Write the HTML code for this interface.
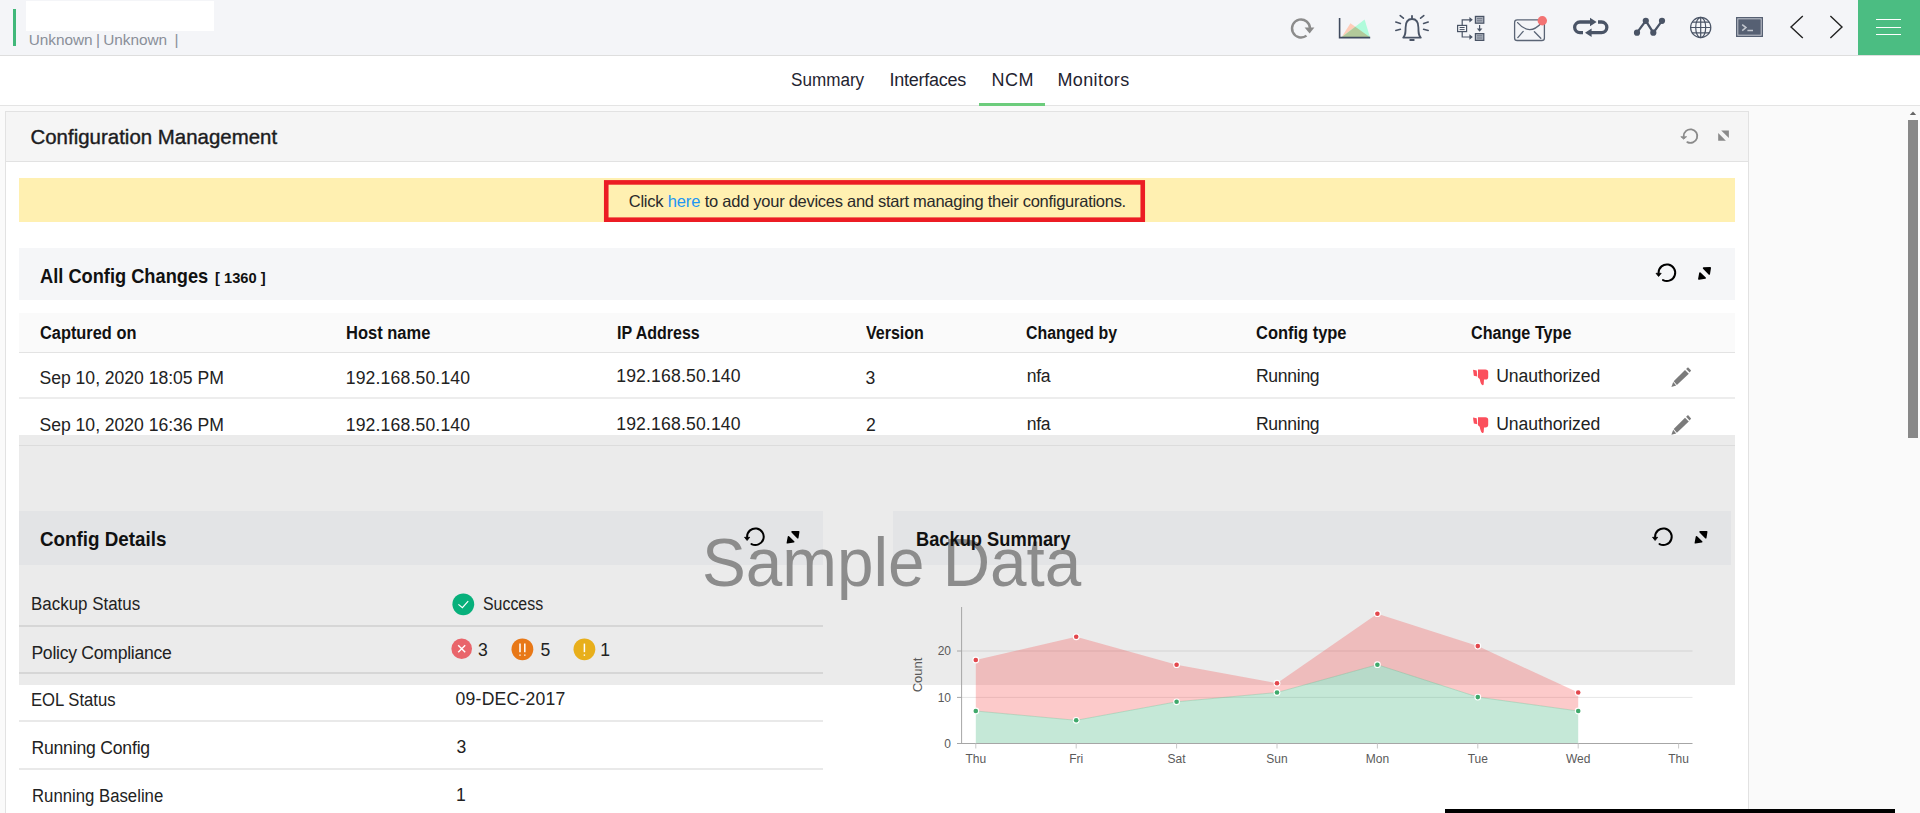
<!DOCTYPE html>
<html lang="en"><head><meta charset="utf-8"><title>Configuration Management - NCM</title>
<style>
html,body{margin:0;padding:0;overflow:hidden}
body{width:1920px;height:813px;overflow:hidden;background:#fafafa;font-family:'Liberation Sans',sans-serif;position:relative}
.a{position:absolute}
.t{position:absolute;display:block;white-space:pre;margin:0;padding:0;font-weight:normal;text-decoration:none}
svg{position:absolute;left:0;top:0;overflow:visible}
</style></head>
<body>
<header class="a" style="left:0;top:0;width:1920px;height:55px;background:#f4f5f8;border-bottom:1px solid #dedede">
<div class="a" style="left:13px;top:9px;width:3px;height:37px;background:#41b87a"></div>
<div class="a" style="left:26px;top:1px;width:188px;height:30px;background:#fff"></div>
<div class="t" style="left:28.84px;top:29.70px;font-size:15.4px;line-height:20px;color:#8a8f98;letter-spacing:-0.079px;">Unknown</div>
<div class="t" style="left:96.10px;top:29.70px;font-size:15.4px;line-height:20px;color:#8a8f98;">|</div>
<div class="t" style="left:103.34px;top:29.70px;font-size:15.4px;line-height:20px;color:#8a8f98;letter-spacing:-0.079px;">Unknown</div>
<div class="t" style="left:174.60px;top:29.70px;font-size:15.4px;line-height:20px;color:#8a8f98;">|</div>
<svg class="a" width="1920" height="56" viewBox="0 0 1920 56" fill="none">
<!-- refresh -->
<path d="M1306.5 35.6A9 9 0 1 1 1310 28.5" stroke="#8c8c8c" stroke-width="2.4"/><path d="M1304.6 27.6H1314.4L1309.6 33.4Z" fill="#8a8a8a"/>
<!-- area chart -->
<path d="M1341.6 37.2L1350.4 23.2L1370 37.2Z" fill="#ffcdb9"/><path d="M1341.6 37.2L1364.6 19.4L1370 37.2Z" fill="#b0fbdb"/><path d="M1341.6 37.2L1355.3 26.7L1370 37.2Z" fill="#b2c99a"/>
<path d="M1339.6 18V37.6H1370.2" stroke="#3f4a5e" stroke-width="1.6"/>
<!-- bell -->
<g stroke="#4a5466" stroke-width="1.8" stroke-linecap="round" stroke-linejoin="round">
<path d="M1403.2 37.6C1405.6 35.4 1405.6 32.6 1405.6 27.6C1405.6 22 1408.2 19 1412 19C1415.8 19 1418.4 22 1418.4 27.6C1418.4 32.6 1418.4 35.4 1420.8 37.6Z"/>
<path d="M1412 15.8V18.6M1410.2 40H1413.8"/>
<path d="M1400.2 15.6L1403.4 18.2M1395.8 22L1400.4 23.4M1395.8 30.4L1400.4 29.2M1423.8 15.6L1420.6 18.2M1428.2 22L1423.6 23.4M1428.2 30.4L1423.6 29.2" stroke-width="1.6"/>
</g>
<!-- workflow -->
<g stroke="#4a5466" stroke-width="1.2">
<rect x="1457.6" y="25.4" width="9" height="6.2" fill="#f4f5f8"/><path d="M1459.6 27.5H1464.6M1459.6 29.6H1464.6" stroke-width="1"/>
<rect x="1475.4" y="16.4" width="8.4" height="6.8" fill="#a9afba"/><rect x="1475.4" y="33.6" width="8.4" height="6.8" fill="#a9afba"/>
<path d="M1477 18.6H1482.2M1477 20.8H1482.2M1477 35.8H1482.2M1477 38H1482.2" stroke-width=".9" stroke="#6b7485"/>
<path d="M1462.2 25V19.8H1470M1462.2 32V37H1470M1479.6 25V29.4"/>
</g>
<path d="M1469.4 17L1472.8 19.8L1469.4 22.6ZM1469.4 34.2L1472.8 37L1469.4 39.8ZM1476.8 28.6H1482.4L1479.6 31.8Z" fill="#4a5466"/>
<!-- mail -->
<g stroke="#5a6475" stroke-width="1.3" stroke-linecap="round"><rect x="1514.6" y="19.9" width="29.8" height="20.6" rx="2.6"/>
<path d="M1517.6 22.6Q1529.6 36.4 1541.4 23M1523.2 31.4L1517.8 37.6M1534.4 31.8L1540.8 38.2"/></g>
<circle cx="1542.3" cy="20.7" r="4.7" fill="#f37373"/>
<!-- loop -->
<g stroke="#4a5466" stroke-width="3.3"><path d="M1583 32.7H1580A5.35 5.35 0 0 1 1580 22H1591"/><path d="M1598 22H1601.5A5.35 5.35 0 0 1 1601.5 32.7H1591"/></g>
<path d="M1590 17.8L1596.6 22L1590 26.2ZM1591.6 28.5L1585 32.7L1591.6 36.9Z" fill="#4a5466"/>
<!-- line graph -->
<path d="M1637 32.7L1645.8 20.8L1653.3 32.7L1662 20.8" stroke="#4a5466" stroke-width="2.2"/>
<g fill="#4a5466"><circle cx="1637" cy="32.7" r="3.1"/><circle cx="1645.8" cy="20.8" r="3.1"/><circle cx="1653.3" cy="32.7" r="3.1"/><circle cx="1662" cy="20.8" r="3.1"/></g>
<!-- globe -->
<g stroke="#4a5466" stroke-width="1.2"><circle cx="1700.7" cy="27.5" r="10.1"/><ellipse cx="1700.7" cy="27.5" rx="5" ry="10.1"/>
<path d="M1700.7 17.4V37.6M1690.6 27.5H1710.8M1692.2 22.2H1709.2M1692.2 32.8H1709.2"/></g>
<!-- terminal -->
<rect x="1736" y="17" width="27" height="20" fill="#566073"/><rect x="1737.8" y="18.8" width="23.4" height="16.4" stroke="#c3c7cf" stroke-width="1"/>
<path d="M1742.2 24.6L1746 27.6L1742.2 30.6M1747.4 30.4H1753" stroke="#c3c7cf" stroke-width="1.5"/>
<!-- chevrons -->
<path d="M1802.8 16L1791 27L1802.8 38M1830.4 16L1842 27L1830.4 38" stroke="#222" stroke-width="1.4"/>
</svg>
<div class="a" style="left:1858px;top:0;width:62px;height:55px;background:#4bbd82"></div>
<div class="a" style="left:1876px;top:18.8px;width:25px;height:1.4px;background:#fff"></div>
<div class="a" style="left:1876px;top:26.7px;width:25px;height:1.4px;background:#fff"></div>
<div class="a" style="left:1876px;top:33.8px;width:25px;height:1.4px;background:#fff"></div>
</header>
<nav class="a" style="left:0;top:56px;width:1920px;height:49px;background:#fff;border-bottom:1px solid #e4e4e4">
<div class="a" style="left:979px;top:47px;width:66px;height:3px;background:#6ccc7c"></div>
</nav>
<a class="t" style="left:790.57px;top:68.50px;font-size:18px;line-height:23px;color:#1f2430;transform:scaleX(0.9497);transform-origin:0 0;">Summary</a>
<a class="t" style="left:889.39px;top:68.50px;font-size:18px;line-height:23px;color:#1f2430;letter-spacing:-0.241px;">Interfaces</a>
<a class="t" style="left:991.39px;top:68.50px;font-size:18px;line-height:23px;color:#1f2430;letter-spacing:0.513px;">NCM</a>
<a class="t" style="left:1057.39px;top:68.50px;font-size:18px;line-height:23px;color:#1f2430;letter-spacing:0.407px;">Monitors</a>
<main>
<section class="a" style="left:5px;top:111px;width:1742px;height:720px;background:#fff;border:1px solid #e2e2e2">
<div class="a" style="left:0;top:0;width:1742px;height:49px;background:#f5f5f5;border-bottom:1px solid #e2e2e2"></div>
</section>
<h1 class="t" style="left:30.44px;top:124.40px;font-size:20.4px;line-height:26px;color:#1c1c1e;letter-spacing:0.031px;-webkit-text-stroke:0.4px #1c1c1e;">Configuration Management</h1>
<div class="a" style="left:19px;top:178px;width:1716px;height:44px;background:#fff0b1"></div>
<svg class="a" width="1920" height="813" viewBox="0 0 1920 813"><rect x="606.25" y="182.4" width="536.5" height="37.3" fill="none" stroke="#ec1c24" stroke-width="4.6"/></svg>
<div class="t" style="left:628.83px;top:190.50px;font-size:16.5px;line-height:21px;color:#2a2a2a;letter-spacing:-0.283px;">Click</div>
<a class="t" style="left:667.77px;top:190.50px;font-size:16.5px;line-height:21px;color:#2196f3;letter-spacing:-0.141px;">here</a>
<div class="t" style="left:704.80px;top:190.50px;font-size:16.5px;line-height:21px;color:#2a2a2a;letter-spacing:-0.273px;">to add your devices and start managing their configurations.</div>
<div class="a" style="left:19px;top:248px;width:1716px;height:52px;background:#f5f6f8"></div>
<h2 class="t" style="left:40.21px;top:262.70px;font-size:20.2px;line-height:26px;color:#111;font-weight:bold;transform:scaleX(0.9036);transform-origin:0 0;">All Config Changes</h2>
<div class="t" style="left:214.81px;top:267.50px;font-size:15.4px;line-height:20px;color:#111;font-weight:bold;transform:scaleX(0.9543);transform-origin:0 0;">[ 1360 ]</div>
<div class="a" style="left:19px;top:313px;width:1716px;height:39px;background:#fafafa;border-bottom:1px solid #e3e3e3"></div>
<strong class="t" style="left:40.09px;top:321.50px;font-size:17.6px;line-height:22px;color:#111;font-weight:bold;transform:scaleX(0.9302);transform-origin:0 0;">Captured on</strong>
<strong class="t" style="left:345.77px;top:321.50px;font-size:17.6px;line-height:22px;color:#111;font-weight:bold;transform:scaleX(0.9374);transform-origin:0 0;">Host name</strong>
<strong class="t" style="left:617.30px;top:321.50px;font-size:17.6px;line-height:22px;color:#111;font-weight:bold;transform:scaleX(0.9098);transform-origin:0 0;">IP Address</strong>
<strong class="t" style="left:865.60px;top:321.50px;font-size:17.6px;line-height:22px;color:#111;font-weight:bold;transform:scaleX(0.9102);transform-origin:0 0;">Version</strong>
<strong class="t" style="left:1025.60px;top:321.50px;font-size:17.6px;line-height:22px;color:#111;font-weight:bold;transform:scaleX(0.9035);transform-origin:0 0;">Changed by</strong>
<strong class="t" style="left:1255.59px;top:321.50px;font-size:17.6px;line-height:22px;color:#111;font-weight:bold;transform:scaleX(0.9353);transform-origin:0 0;">Config type</strong>
<strong class="t" style="left:1470.59px;top:321.50px;font-size:17.6px;line-height:22px;color:#111;font-weight:bold;transform:scaleX(0.9204);transform-origin:0 0;">Change Type</strong>
<div class="a" style="left:19px;top:397px;width:1716px;height:2px;background:#ededed"></div>
<svg class="a" style="z-index:1" width="1920" height="813" viewBox="0 0 1920 813"><g transform="translate(0 0)" fill="#fb4f5c"><path d="M1473 369.8L1476.7 370.4L1477.3 376.4L1473.8 375.8Z"/>
<path d="M1478 369.4H1485.4Q1488.2 369.4 1488.2 372V377Q1488.2 379.6 1485.4 379.6H1484L1483.7 384.2Q1483.4 385.5 1482.3 385.1Q1481 384.5 1480.4 382L1479.7 379L1478 377.4Z"/></g>
<g transform="translate(0 0)" fill="#7b7b7b"><path d="M1673.7 381.2L1685 370L1688.8 373.8L1676.9 385Z"/><path d="M1673.2 382L1676.2 385.6L1671.4 386.9Z"/><path d="M1686.1 368.9L1688 367.3L1691.1 370.6L1689.6 372.6Z"/></g><g transform="translate(0 47.8)" fill="#fb4f5c"><path d="M1473 369.8L1476.7 370.4L1477.3 376.4L1473.8 375.8Z"/>
<path d="M1478 369.4H1485.4Q1488.2 369.4 1488.2 372V377Q1488.2 379.6 1485.4 379.6H1484L1483.7 384.2Q1483.4 385.5 1482.3 385.1Q1481 384.5 1480.4 382L1479.7 379L1478 377.4Z"/></g>
<g transform="translate(0 47.8)" fill="#7b7b7b"><path d="M1673.7 381.2L1685 370L1688.8 373.8L1676.9 385Z"/><path d="M1673.2 382L1676.2 385.6L1671.4 386.9Z"/><path d="M1686.1 368.9L1688 367.3L1691.1 370.6L1689.6 372.6Z"/></g></svg>
<span class="t" style="left:39.55px;top:367.00px;font-size:17.6px;line-height:22px;color:#222;letter-spacing:-0.030px;">Sep 10, 2020 18:05 PM</span>
<span class="t" style="left:345.70px;top:367.00px;font-size:17.6px;line-height:22px;color:#222;letter-spacing:0.161px;">192.168.50.140</span>
<span class="t" style="left:616.20px;top:365.00px;font-size:17.6px;line-height:22px;color:#222;letter-spacing:0.161px;">192.168.50.140</span>
<span class="t" style="left:865.55px;top:366.50px;font-size:17.6px;line-height:22px;color:#222;">3</span>
<span class="t" style="left:1026.70px;top:365.00px;font-size:17.6px;line-height:22px;color:#222;letter-spacing:-0.289px;">nfa</span>
<span class="t" style="left:1255.92px;top:365.00px;font-size:17.6px;line-height:22px;color:#222;letter-spacing:-0.300px;">Running</span>
<span class="t" style="left:1496.20px;top:365.00px;font-size:17.6px;line-height:22px;color:#222;letter-spacing:-0.041px;">Unauthorized</span>
<span class="t" style="left:39.55px;top:414.00px;font-size:17.6px;line-height:22px;color:#222;letter-spacing:-0.030px;">Sep 10, 2020 16:36 PM</span>
<span class="t" style="left:345.70px;top:414.00px;font-size:17.6px;line-height:22px;color:#222;letter-spacing:0.161px;">192.168.50.140</span>
<span class="t" style="left:616.20px;top:413.20px;font-size:17.6px;line-height:22px;color:#222;letter-spacing:0.161px;">192.168.50.140</span>
<span class="t" style="left:865.97px;top:413.50px;font-size:17.6px;line-height:22px;color:#222;">2</span>
<span class="t" style="left:1026.70px;top:413.20px;font-size:17.6px;line-height:22px;color:#222;letter-spacing:-0.289px;">nfa</span>
<span class="t" style="left:1255.92px;top:413.20px;font-size:17.6px;line-height:22px;color:#222;letter-spacing:-0.300px;">Running</span>
<span class="t" style="left:1496.20px;top:413.20px;font-size:17.6px;line-height:22px;color:#222;letter-spacing:-0.041px;">Unauthorized</span>
<div class="a" style="left:19px;top:435px;width:1716px;height:250px;background:#ebebeb;z-index:2"></div>
<div class="a" style="left:19px;top:445px;width:1716px;height:1px;background:#dcdcdc;z-index:2"></div>
<div class="a" style="left:19px;top:511px;width:804px;height:53.5px;background:#e3e4e6;z-index:2"></div>
<div class="a" style="left:893px;top:511px;width:838px;height:53.5px;background:#e3e4e6;z-index:2"></div>
<h2 class="t" style="left:40.01px;top:526.00px;font-size:20.2px;line-height:26px;color:#111;font-weight:bold;transform:scaleX(0.9312);transform-origin:0 0;z-index:5;">Config Details</h2>
<h2 class="t" style="left:915.66px;top:526.00px;font-size:20.2px;line-height:26px;color:#111;font-weight:bold;transform:scaleX(0.9050);transform-origin:0 0;z-index:5;">Backup Summary</h2>
<p class="t" style="left:701.65px;top:519.00px;font-size:69px;line-height:87px;color:#8c8c8c;transform:scaleX(0.9508);transform-origin:0 0;z-index:3;">Sample Data</p>
<span class="t" style="left:31.48px;top:593.00px;font-size:17.6px;line-height:22px;color:#222;transform:scaleX(0.9627);transform-origin:0 0;z-index:5;">Backup Status</span>
<span class="t" style="left:31.42px;top:641.50px;font-size:17.6px;line-height:22px;color:#222;letter-spacing:-0.268px;z-index:5;">Policy Compliance</span>
<span class="t" style="left:31.00px;top:689.00px;font-size:17.6px;line-height:22px;color:#222;transform:scaleX(0.9469);transform-origin:0 0;z-index:5;">EOL Status</span>
<span class="t" style="left:31.42px;top:736.50px;font-size:17.6px;line-height:22px;color:#222;letter-spacing:-0.197px;z-index:5;">Running Config</span>
<span class="t" style="left:32.09px;top:784.70px;font-size:17.6px;line-height:22px;color:#222;transform:scaleX(0.9516);transform-origin:0 0;z-index:5;">Running Baseline</span>
<span class="t" style="left:483.30px;top:592.70px;font-size:17.6px;line-height:22px;color:#222;transform:scaleX(0.9035);transform-origin:0 0;z-index:5;">Success</span>
<span class="t" style="left:478.05px;top:638.60px;font-size:17.6px;line-height:22px;color:#222;z-index:5;">3</span>
<span class="t" style="left:540.55px;top:638.60px;font-size:17.6px;line-height:22px;color:#222;z-index:5;">5</span>
<span class="t" style="left:600.30px;top:638.60px;font-size:17.6px;line-height:22px;color:#222;z-index:5;">1</span>
<span class="t" style="left:455.55px;top:687.50px;font-size:17.6px;line-height:22px;color:#222;letter-spacing:0.225px;z-index:5;">09-DEC-2017</span>
<span class="t" style="left:456.55px;top:735.50px;font-size:17.6px;line-height:22px;color:#222;z-index:5;">3</span>
<span class="t" style="left:456.00px;top:784.00px;font-size:17.6px;line-height:22px;color:#222;z-index:5;">1</span>
<div class="a" style="left:19px;top:624.6px;width:803.5px;height:2px;background:#000;opacity:.085;z-index:4"></div>
<div class="a" style="left:19px;top:672.2px;width:803.5px;height:2px;background:#000;opacity:.085;z-index:4"></div>
<div class="a" style="left:19px;top:720.0px;width:803.5px;height:2px;background:#000;opacity:.085;z-index:4"></div>
<div class="a" style="left:19px;top:767.8px;width:803.5px;height:2px;background:#000;opacity:.085;z-index:4"></div>
<svg class="a" style="z-index:5" width="1920" height="813" viewBox="0 0 1920 813" fill="none">
<circle cx="463.3" cy="604.3" r="10.9" fill="#07b07b"/><path d="M458.4 604.4L462.4 607.6L468.2 601.2" stroke="#fff" stroke-width="1.2"/>
<circle cx="461.7" cy="648.7" r="10.3" fill="#e9656b"/><path d="M458.2 645.2L465.2 652.2M465.2 645.2L458.2 652.2" stroke="#fff" stroke-width="1.4"/>
<circle cx="522.4" cy="649.3" r="10.9" fill="#e87817"/><path d="M520 643.6V652.2M524.8 643.6V652.2" stroke="#fff" stroke-width="1.5"/><path d="M519.3 654.4h1.4v1.4h-1.4zM524.1 654.4h1.4v1.4h-1.4z" fill="#fff"/>
<circle cx="584.4" cy="649.3" r="10.9" fill="#e8af1b"/><path d="M584.4 643.6V652.2" stroke="#fff" stroke-width="1.5"/><path d="M583.7 654.4h1.4v1.4h-1.4z" fill="#fff"/>
</svg>
<svg class="a" style="z-index:4" width="1920" height="813" viewBox="0 0 1920 813" font-family="'Liberation Sans',sans-serif" font-size="12" fill="#5a5a5a">
<g stroke="#000" stroke-opacity=".1" stroke-width="1"><line x1="962" y1="651" x2="1692.5" y2="651"/><line x1="962" y1="697.4" x2="1692.5" y2="697.4"/></g>
<polygon points="975.8,711.0 1076.2,720.3 1176.6,701.8 1277.0,692.5 1377.4,664.7 1477.8,697.1 1578.2,711.0 1578.2,743.5 975.8,743.5" fill="#3eb27a" fill-opacity=".3"/>
<polygon points="975.8,660.0 1076.2,636.8 1176.6,664.7 1277.0,683.2 1377.4,613.7 1477.8,646.1 1578.2,692.5 1578.2,711.0 1477.8,697.1 1377.4,664.7 1277.0,692.5 1176.6,701.8 1076.2,720.3 975.8,711.0" fill="#f44e4e" fill-opacity=".3"/>
<polyline points="975.8,711.0 1076.2,720.3 1176.6,701.8 1277.0,692.5 1377.4,664.7 1477.8,697.1 1578.2,711.0" fill="none" stroke="#3eb27a" stroke-opacity=".25" stroke-width="1"/>
<g stroke="#a6a6a6" stroke-width="1" fill="none"><line x1="961.6" y1="607" x2="961.6" y2="744"/><line x1="961.1" y1="743.5" x2="1692.5" y2="743.5"/>
<line x1="957" y1="651" x2="961.75" y2="651"/><line x1="957" y1="697.4" x2="961.75" y2="697.4"/><line x1="957" y1="743.5" x2="961.75" y2="743.5"/></g>
<g stroke="#c8c8c8" stroke-width="1"><line x1="975.8" y1="743.5" x2="975.8" y2="748.5"/><line x1="1076.2" y1="743.5" x2="1076.2" y2="748.5"/><line x1="1176.6" y1="743.5" x2="1176.6" y2="748.5"/><line x1="1277.0" y1="743.5" x2="1277.0" y2="748.5"/><line x1="1377.4" y1="743.5" x2="1377.4" y2="748.5"/><line x1="1477.8" y1="743.5" x2="1477.8" y2="748.5"/><line x1="1578.2" y1="743.5" x2="1578.2" y2="748.5"/><line x1="1678.6" y1="743.5" x2="1678.6" y2="748.5"/></g>
<circle cx="975.8" cy="660.0" r="3.4" fill="#fff"/><circle cx="975.8" cy="660.0" r="2.3" fill="#e2474c"/><circle cx="1076.2" cy="636.8" r="3.4" fill="#fff"/><circle cx="1076.2" cy="636.8" r="2.3" fill="#e2474c"/><circle cx="1176.6" cy="664.7" r="3.4" fill="#fff"/><circle cx="1176.6" cy="664.7" r="2.3" fill="#e2474c"/><circle cx="1277.0" cy="683.2" r="3.4" fill="#fff"/><circle cx="1277.0" cy="683.2" r="2.3" fill="#e2474c"/><circle cx="1377.4" cy="613.7" r="3.4" fill="#fff"/><circle cx="1377.4" cy="613.7" r="2.3" fill="#e2474c"/><circle cx="1477.8" cy="646.1" r="3.4" fill="#fff"/><circle cx="1477.8" cy="646.1" r="2.3" fill="#e2474c"/><circle cx="1578.2" cy="692.5" r="3.4" fill="#fff"/><circle cx="1578.2" cy="692.5" r="2.3" fill="#e2474c"/><circle cx="975.8" cy="711.0" r="3.4" fill="#fff"/><circle cx="975.8" cy="711.0" r="2.3" fill="#3fa96b"/><circle cx="1076.2" cy="720.3" r="3.4" fill="#fff"/><circle cx="1076.2" cy="720.3" r="2.3" fill="#3fa96b"/><circle cx="1176.6" cy="701.8" r="3.4" fill="#fff"/><circle cx="1176.6" cy="701.8" r="2.3" fill="#3fa96b"/><circle cx="1277.0" cy="692.5" r="3.4" fill="#fff"/><circle cx="1277.0" cy="692.5" r="2.3" fill="#3fa96b"/><circle cx="1377.4" cy="664.7" r="3.4" fill="#fff"/><circle cx="1377.4" cy="664.7" r="2.3" fill="#3fa96b"/><circle cx="1477.8" cy="697.1" r="3.4" fill="#fff"/><circle cx="1477.8" cy="697.1" r="2.3" fill="#3fa96b"/><circle cx="1578.2" cy="711.0" r="3.4" fill="#fff"/><circle cx="1578.2" cy="711.0" r="2.3" fill="#3fa96b"/>
<text x="951" y="655.3" text-anchor="end">20</text><text x="951" y="701.7" text-anchor="end">10</text><text x="951" y="748" text-anchor="end">0</text>
<text x="975.8" y="763" text-anchor="middle">Thu</text><text x="1076.2" y="763" text-anchor="middle">Fri</text><text x="1176.6" y="763" text-anchor="middle">Sat</text><text x="1277.0" y="763" text-anchor="middle">Sun</text><text x="1377.4" y="763" text-anchor="middle">Mon</text><text x="1477.8" y="763" text-anchor="middle">Tue</text><text x="1578.2" y="763" text-anchor="middle">Wed</text><text x="1678.6" y="763" text-anchor="middle">Thu</text>
<text transform="translate(921.5 675) rotate(-90)" text-anchor="middle" font-size="13">Count</text>
</svg>
<svg class="a" style="z-index:6" width="1920" height="813" viewBox="0 0 1920 813" fill="none">
<path d="M1683.70 136.10A6.8 6.8 0 1 1 1687.31 142.10" stroke="#8a8a8a" stroke-width="1.8" stroke-linecap="round" fill="none"/><path d="M1680.80 136.70H1686.60L1683.70 139.22Z" fill="#8a8a8a" stroke="#8a8a8a" stroke-width=".8" stroke-linejoin="round"/>
<path d="M1721.2 130.4H1728.9V138.1Z" fill="#8a8a8a"/><path d="M1718.2 133V140.7H1725.9Z" fill="#8a8a8a"/>
<path d="M1658.60 272.70A8.3 8.3 0 1 1 1663.00 280.03" stroke="#000" stroke-width="2" stroke-linecap="round" fill="none"/><path d="M1656.00 273.30H1661.20L1658.60 276.49Z" fill="#000" stroke="#000" stroke-width=".8" stroke-linejoin="round"/>
<g fill="#000" stroke="#000" stroke-width="1.6" stroke-linejoin="round"><polygon points="1703.6,268.1 1710.2,267.9 1709.2,274.0"/><polygon points="1700.0,273.0 1698.9,279.0 1705.2,278.0"/></g>
<path d="M747.10 536.70A8.3 8.3 0 1 1 751.50 544.03" stroke="#000" stroke-width="2" stroke-linecap="round" fill="none"/><path d="M744.50 537.30H749.70L747.10 540.49Z" fill="#000" stroke="#000" stroke-width=".8" stroke-linejoin="round"/>
<g fill="#000" stroke="#000" stroke-width="1.6" stroke-linejoin="round"><polygon points="792.1,531.9 798.7,531.7 797.7,537.8"/><polygon points="788.5,536.8 787.4,542.8 793.7,541.8"/></g>
<path d="M1655.10 536.70A8.3 8.3 0 1 1 1659.50 544.03" stroke="#000" stroke-width="2" stroke-linecap="round" fill="none"/><path d="M1652.50 537.30H1657.70L1655.10 540.49Z" fill="#000" stroke="#000" stroke-width=".8" stroke-linejoin="round"/>
<g fill="#000" stroke="#000" stroke-width="1.6" stroke-linejoin="round"><polygon points="1700.1,531.9 1706.7,531.7 1705.7,537.8"/><polygon points="1696.5,536.8 1695.4,542.8 1701.7,541.8"/></g>
</svg>
</main>
<div class="a" style="left:1908px;top:120px;width:10px;height:318px;background:#888;z-index:8"></div>
<svg class="a" style="z-index:8" width="1920" height="813" viewBox="0 0 1920 813"><path d="M1909.8 115L1913 111.6L1916.2 115Z" fill="#666"/></svg>
<div class="a" style="left:1445px;top:809px;width:450px;height:4px;background:#000;z-index:9"></div>
</body></html>
